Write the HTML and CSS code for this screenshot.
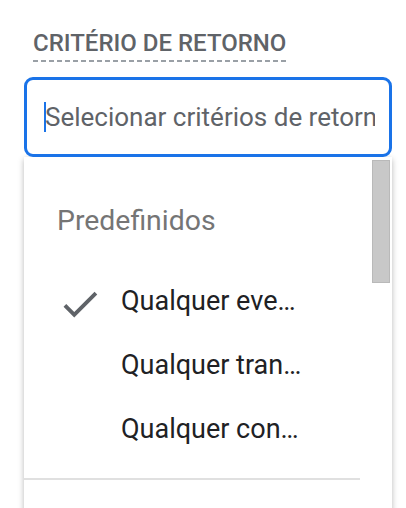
FILE: index.html
```html
<!DOCTYPE html>
<html lang="pt">
<head>
<meta charset="utf-8">
<title>Critério de retorno</title>
<link rel="stylesheet" href="styles.css">
</head>
<body>
<div class="field">
  <div class="label-row"><span class="label">CRITÉRIO DE RETORNO</span></div>
  <div class="input">
    <span class="caret"></span>
    <span class="placeholder">Selecionar critérios de retorno</span>
  </div>
  <div class="menu">
    <div class="scroll-thumb"></div>
    <div class="heading">Predefinidos</div>
    <ul class="options">
      <li class="option selected">
        <svg class="check" viewBox="0 0 24 24" aria-hidden="true"><path d="M9 16.17L4.83 12l-1.42 1.41L9 19 21 7l-1.41-1.41z"/></svg>
        <span class="option-text">Qualquer evento</span>
      </li>
      <li class="option">
        <span class="check-space"></span>
        <span class="option-text">Qualquer transação</span>
      </li>
      <li class="option">
        <span class="check-space"></span>
        <span class="option-text">Qualquer conversão</span>
      </li>
    </ul>
    <div class="divider"></div>
  </div>
</div>
</body>
</html>
```
FILE: styles.css
```css
html, body {
  margin: 0;
  padding: 0;
  background: #ffffff;
  font-family: Roboto, "Noto Sans", Arial, sans-serif;
  overflow: hidden;
}
.field {
  width: 368px;
  margin: 0 0 0 24px;
  padding-top: 29px;
}
.label-row {
  padding-left: 9px;
  display: flex;
}
.label {
  font-size: 24px;
  line-height: 28px;
  font-weight: 500;
  color: #5f6368;
  padding-bottom: 5px;
  background-image: linear-gradient(to right, #9aa0a6 0 5px, transparent 5px 8px);
  background-size: 8px 2px;
  background-repeat: repeat-x;
  background-position: 0 100%;
}
.input {
  margin-top: 15px;
  height: 80px;
  box-sizing: border-box;
  border: 3px solid #1a73e8;
  border-radius: 9px;
  display: flex;
  align-items: center;
  padding: 0 14px 0 17px;
  overflow: hidden;
  white-space: nowrap;
  position: relative;
  z-index: 2;
  background: #fff;
}
.caret {
  flex: none;
  width: 2px;
  height: 30px;
  background: #1a73e8;
  margin-right: -1px;
}
.placeholder {
  font-size: 26px;
  color: #5f6368;
  overflow: hidden;
}
.menu {
  position: relative;
  background: #fff;
  box-shadow: 0 2px 6px rgba(0,0,0,0.28);
  padding-top: 32px;
  height: 400px;
}
.scroll-thumb {
  position: absolute;
  top: 3px;
  right: 2px;
  width: 18px;
  height: 123px;
  box-sizing: border-box;
  background: #c8c8c8;
  border: 1px solid #b9b9b9;
}
.heading {
  height: 64px;
  line-height: 64px;
  padding-left: 33px;
  font-size: 28.4px;
  color: #757575;
}
.options {
  list-style: none;
  margin: 16px 0 0 0;
  padding: 0;
}
.option {
  height: 64px;
  display: flex;
  align-items: center;
  padding-left: 33px;
  gap: 18px;
}
.check, .check-space {
  flex: none;
  width: 46px;
  height: 46px;
}
.check {
  margin-top: 6px;
}
.check path {
  fill: #5f6368;
}
.option-text {
  font-size: 27px;
  color: #202124;
  width: 189px;
  white-space: nowrap;
  overflow: hidden;
  text-overflow: ellipsis;
}
.divider {
  margin: 17px 32px 0 0;
  height: 2px;
  background: #e0e0e0;
}
```
